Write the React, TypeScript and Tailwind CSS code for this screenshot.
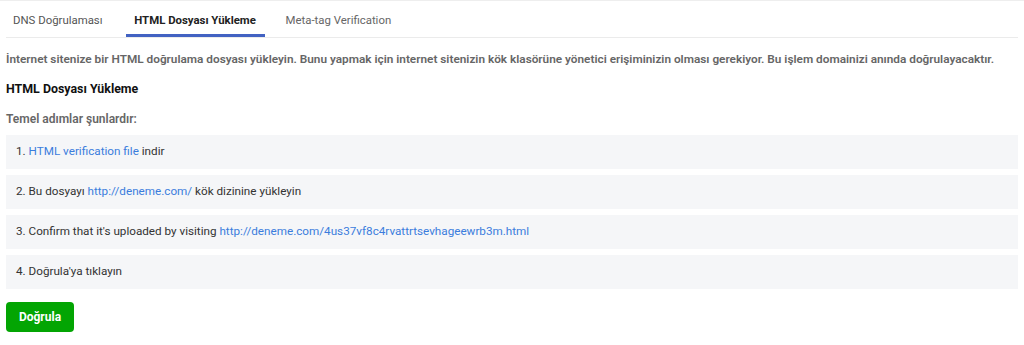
import React from "react";

const steps: React.ReactNode[] = [
  <>
    1. <a className="text-[#3b7ddd]">HTML verification file</a> indir
  </>,
  <>
    2. Bu dosyayı <a className="text-[#3b7ddd]">http://deneme.com/</a> kök dizinine yükleyin
  </>,
  <>
    3. Confirm that it's uploaded by visiting{" "}
    <a className="text-[#3b7ddd]">http://deneme.com/4us37vf8c4rvattrtsevhageewrb3m.html</a>
  </>,
  <>4. Doğrula'ya tıklayın</>,
];

export default function App() {
  return (
    <div
      className="w-[1024px] h-[345px] bg-white border-t border-[#eeeeee] overflow-hidden"
      style={{ fontFamily: "Roboto, 'Noto Sans', sans-serif" }}
    >
      <div className="px-[6px]">
        <div className="flex h-[37px] border-b border-[#ebebeb] text-[11.4px] w-[1012px] whitespace-nowrap">
          <div className="px-[7px] pt-[11px] text-[#555]">DNS Doğrulaması</div>
          <div className="ml-[16px] w-[139px] text-center pt-[11px] font-bold text-[#222] border-b-[3px] border-[#4262c2]">
            HTML Dosyası Yükleme
          </div>
          <div className="ml-[21px] pt-[11px] text-[#666]">Meta-tag Verification</div>
        </div>
        <p className="mt-[13px] text-[11.8px] font-semibold text-[#666] leading-[16px] whitespace-nowrap">
          İnternet sitenize bir HTML doğrulama dosyası yükleyin. Bunu yapmak için internet sitenizin kök klasörüne yönetici erişiminizin olması gerekiyor. Bu işlem domainizi anında doğrulayacaktır.
        </p>
        <h3 className="mt-[14px] text-[12.4px] font-bold text-[#111] leading-[16px]">HTML Dosyası Yükleme</h3>
        <p className="mt-[14px] text-[12px] font-semibold text-[#666] leading-[16px]">Temel adımlar şunlardır:</p>
        <div className="mt-[8px] flex flex-col gap-[6px] w-[1012px]">
          {steps.map((s, i) => (
            <div key={i} className="h-[34px] bg-[#f5f6f8] flex items-center px-[10px] text-[11.7px] text-[#333]">
              <span>{s}</span>
            </div>
          ))}
        </div>
        <button className="mt-[13px] w-[68px] h-[30px] rounded-[4px] bg-[#03a503] text-white text-[12px] font-bold">
          Doğrula
        </button>
      </div>
    </div>
  );
}
